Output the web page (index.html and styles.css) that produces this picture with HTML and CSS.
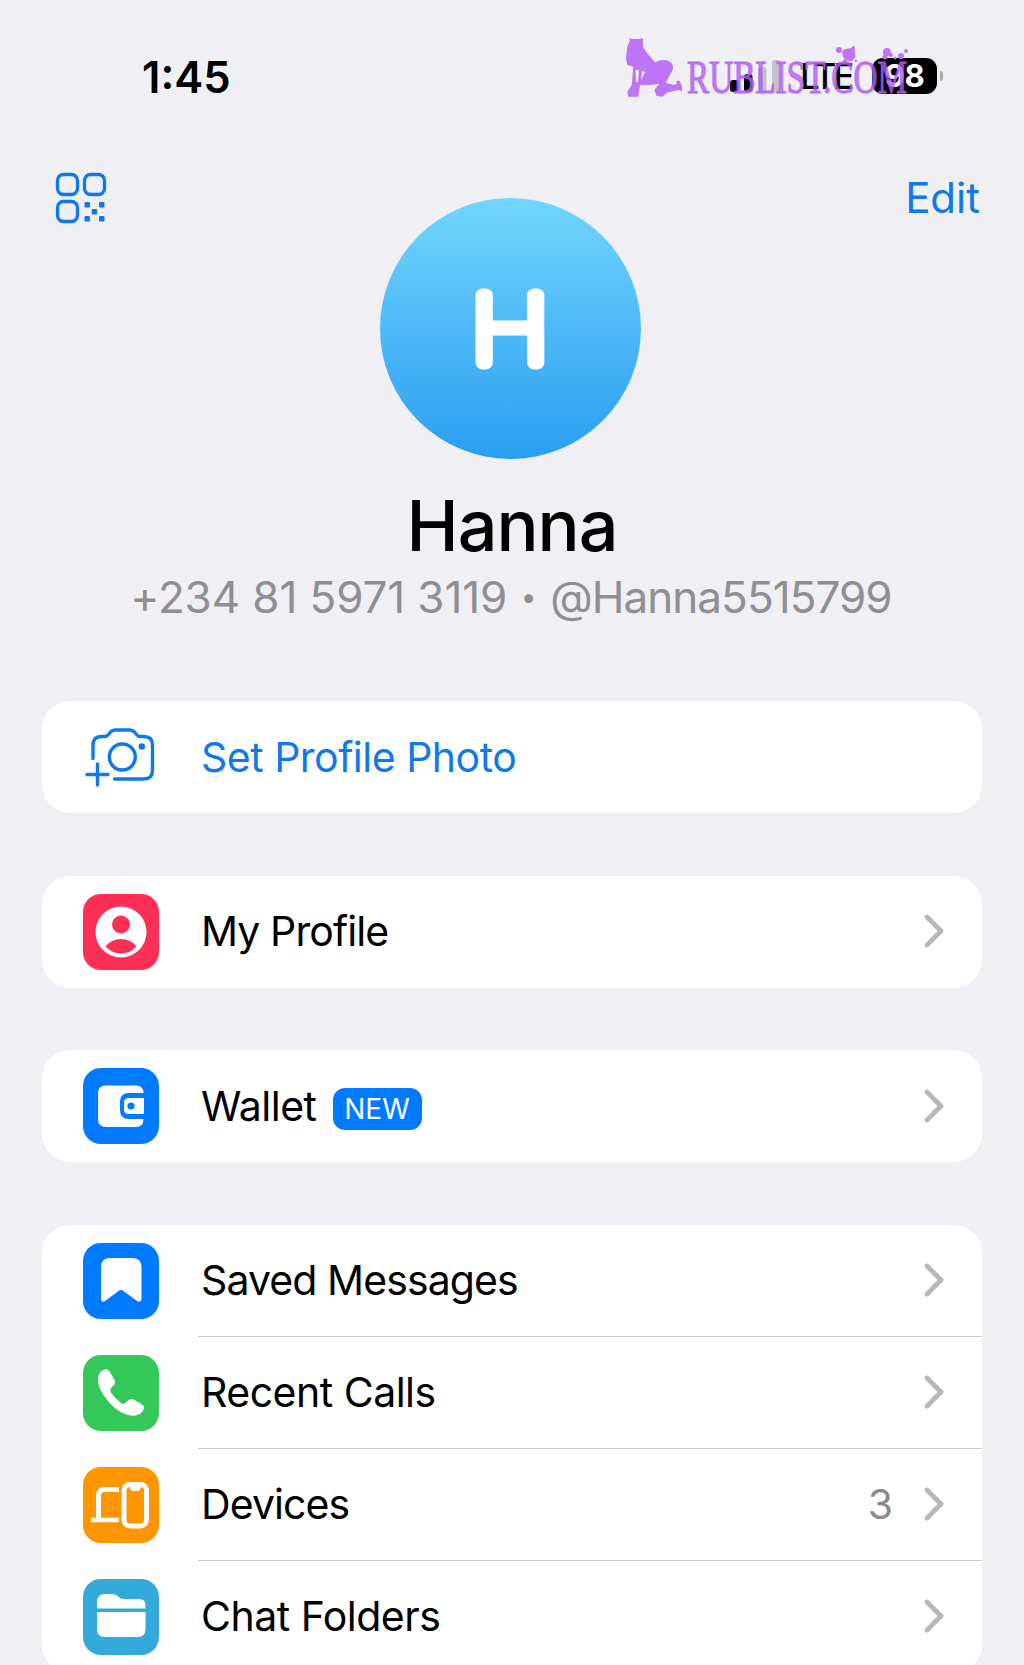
FILE: index.html
```html
<!DOCTYPE html>
<html lang="en">
<head>
<meta charset="utf-8">
<title>Settings</title>
<link rel="stylesheet" href="styles.css">
</head>
<body>
<div class="screen">
  <header class="status">
    <span class="time">1:45</span>
    <div class="indicators">
      <svg class="signal" width="52" height="34" viewBox="0 0 52 34"><rect x="0" y="21" width="8.500" height="12" rx="3"/><rect x="14" y="15" width="8.500" height="18" rx="3"/><g fill="#c3c2c8"><rect x="28" y="8" width="8.500" height="25" rx="3"/><rect x="42" y="1" width="8.500" height="32" rx="3"/></g></svg>
      <span class="network">LTE</span>
      <span class="battery">98</span>
      <span class="nub"></span>
    </div>
    <svg class="watermark" width="290" height="64" viewBox="0 0 290 64">
      <g fill="#be74f7">
        <path fill-rule="evenodd" d="M5 2 4 0 8 1 15 1 18 0 18 8.700Q22 16 26.700 20.300L30 24.300Q34 22 38.300 22 43 22 45.700 24.300 49 28 47.700 32L44.300 38 41 44.700 49 47 52 46 51 43 54.300 42.700 57 48 57 53.500 54 52 50 52.700 41.700 54.700 37.700 58.700 31.700 58 29.300 52 34.300 46 23.300 47 15 47 13.300 58.700 3.300 58.700 2.300 53.700 6.700 47 8.300 28.700 2.300 27 1 20.300 2.300 8.700ZM10.500 32 11 44 13 44 14 32ZM17 33 16 42 20 34Z"/>
        <path d="M217 14Q219 10 225 10.500L229.500 7.500 230.500 19 227 23Q222 24 218 19Z"/><circle cx="214" cy="12" r="3"/><circle cx="220" cy="23" r="2"/><circle cx="231" cy="23" r="1.300"/>
        <circle cx="262" cy="14" r="4"/><circle cx="260" cy="19" r="2.500"/><circle cx="266" cy="17" r="2"/><circle cx="276" cy="18" r="3"/><circle cx="281" cy="13" r="2"/><circle cx="270" cy="20" r="1.500"/>
      </g>
      <text x="62" y="54.500" textLength="220" lengthAdjust="spacingAndGlyphs">RUBLIST.COM</text>
    </svg>
  </header>

  <section class="profile">
    <svg class="qr" width="52" height="52" viewBox="0 0 52 52"><g fill="none" stroke="#0f79e8" stroke-width="3.300"><rect x="2.500" y="2.500" width="20" height="20" rx="6"/><rect x="29.500" y="2.500" width="20" height="20" rx="6"/><rect x="2.500" y="29.500" width="20" height="20" rx="6"/></g><g fill="#0f79e8"><rect x="29.500" y="30" width="5.500" height="5.500" rx="1.200"/><rect x="44" y="30" width="5.500" height="5.500" rx="1.200"/><rect x="36.700" y="37" width="5.500" height="5.500" rx="1.200"/><rect x="29.500" y="44" width="5.500" height="5.500" rx="1.200"/><rect x="44" y="44" width="5.500" height="5.500" rx="1.200"/></g></svg>
    <div class="avatar"><svg width="261" height="261" viewBox="0 0 261 261"><g transform="translate(130 0) scale(1.140 1)"><text class="initial" x="0" y="165" text-anchor="middle">H</text></g></svg></div>
    <span class="edit">Edit</span>
  </section>
  <h1 class="name">Hanna</h1>
  <p class="contact"><span class="phone">+234 81 5971 3119</span><span class="dot">•</span><span class="handle">@Hanna5515799</span></p>

  <main class="cards">
    <section class="card">
      <div class="row action">
        <svg class="icon" width="76" height="76" viewBox="0 0 76 76"><g fill="none" stroke="#0f79e8" stroke-width="3.400" stroke-linecap="round" stroke-linejoin="round"><path d="M10 39.500V26Q10 17.500 18.500 17.500h3q2.500 0 4-2l2-2.500Q29.500 11 32 11H47Q49.500 11 51.500 13l2 2.500q1.500 2 4 2H61q8.500 0 8.500 8.500V51.500q0 8.500-8.500 8.500H31.500"/><circle cx="39.300" cy="38" r="13"/><path d="M4 55.500H25M14.500 45V66"/></g><circle cx="58.800" cy="27.500" r="3.200" fill="#0f79e8"/></svg>
        <span class="label">Set Profile Photo</span>
      </div>
    </section>

    <section class="card">
      <div class="row">
        <svg class="icon" width="76" height="76" viewBox="0 0 76 76"><rect width="76" height="76" rx="18" fill="#fc2f57"/><circle cx="38" cy="38" r="25.500" fill="#fff"/><circle cx="38" cy="30.500" r="9" fill="#fc2f57"/><path d="M22.500 52.500Q28 45 38 45T53.500 52.500Q47 59.500 38 59.500T22.500 52.500Z" fill="#fc2f57"/></svg>
        <span class="label tight">My Profile</span>
        <svg class="chevron" width="20" height="34" viewBox="0 0 20 34"><path d="M3 3 17 17 3 31"/></svg>
      </div>
    </section>

    <section class="card">
      <div class="row">
        <svg class="icon" width="76" height="76" viewBox="0 0 76 76"><rect width="76" height="76" rx="18" fill="#007aff"/><path d="M23 17.500H53Q60.500 17.500 60.500 25H46Q37 25 37 34v8q0 9 9 9h14.500Q60.500 59 53 59H23q-8 0-8-8V25.500q0-8 8-8Z" fill="#fff"/><path d="M45.500 30H61V46H45.500q-4.500 0-4.500-4.500v-7Q41 30 45.500 30Z" fill="#fff"/><circle cx="48" cy="38" r="3.600" fill="#007aff"/></svg>
        <span class="label">Wallet</span><span class="badge">NEW</span>
        <svg class="chevron" width="20" height="34" viewBox="0 0 20 34"><path d="M3 3 17 17 3 31"/></svg>
      </div>
    </section>

    <section class="card">
      <div class="row">
        <svg class="icon" width="76" height="76" viewBox="0 0 76 76"><rect width="76" height="76" rx="18" fill="#007aff"/><path d="M27 15H49q9.500 0 9.500 9V55q0 5-4.500 3L39.800 47.500q-1.800-1.500-3.600 0L22 58q-4 2.500-4-3V24q0-9 9-9Z" fill="#fff"/></svg>
        <span class="label tight">Saved Messages</span>
        <svg class="chevron" width="20" height="34" viewBox="0 0 20 34"><path d="M3 3 17 17 3 31"/></svg>
      </div>
      <div class="row">
        <svg class="icon" width="76" height="76" viewBox="0 0 76 76"><rect width="76" height="76" rx="18" fill="#34c759"/><path d="M18 16.500q6-4.500 9 .5l4 7q2.500 4-1 7-4 3-2 6.500 4 6.500 10 10.500 3 1.800 5.500-1 3.500-4.500 8-2l7 4q5 3 .5 8Q54 62.500 45 60 34 57 25 46 15 34 15 25.500 15 19 18 16.500Z" fill="#fff"/></svg>
        <span class="label">Recent Calls</span>
        <svg class="chevron" width="20" height="34" viewBox="0 0 20 34"><path d="M3 3 17 17 3 31"/></svg>
      </div>
      <div class="row">
        <svg class="icon" width="76" height="76" viewBox="0 0 76 76"><rect width="76" height="76" rx="18" fill="#ff9500"/><g fill="none" stroke="#fff" stroke-width="5"><path d="M36 22.500H21.500Q15.500 22.500 15.500 28.500V52"/><path d="M8 53H36" stroke-width="4.500"/><rect x="41" y="17.500" width="22.500" height="41.500" rx="6"/></g><path d="M46 17H58.500Q58 24 54.500 24h-4.500Q46.500 24 46 17Z" fill="#fff"/></svg>
        <span class="label tight">Devices</span>
        <span class="count">3</span>
        <svg class="chevron" width="20" height="34" viewBox="0 0 20 34"><path d="M3 3 17 17 3 31"/></svg>
      </div>
      <div class="row">
        <svg class="icon" width="76" height="76" viewBox="0 0 76 76"><rect width="76" height="76" rx="18" fill="#34aadc"/><path d="M14 29.500V23q0-8 8-8h7q3 0 5 1.500l3 2.500q1.500 1 4 1H56q6.500 0 6.500 6v3.500ZM14 33H62.500V50q0 8-8 8H22q-8 0-8-8Z" fill="#fff"/></svg>
        <span class="label">Chat Folders</span>
        <svg class="chevron" width="20" height="34" viewBox="0 0 20 34"><path d="M3 3 17 17 3 31"/></svg>
      </div>
    </section>
  </main>
</div>
</body>
</html>
```
FILE: styles.css
```css
* { box-sizing: border-box; }
body { margin: 0; background: #efeff4; color: #000; font-family: Inter, "Liberation Sans", sans-serif; }
.screen { width: 1024px; height: 1665px; overflow: hidden; }
svg { display: block; flex: none; }

.status { position: relative; display: flex; justify-content: space-between; align-items: center; height: 152px; padding: 0 81px 0 142px; }
.time { margin-top: 1px; font-size: 43.500px; font-weight: 600; }
.indicators { display: flex; align-items: center; }
.network { margin-left: 18px; width: 52px; font-size: 35px; font-weight: 500; letter-spacing: -3px; }
.battery { margin-left: 20px; width: 65px; height: 36px; border-radius: 11px; background: #000; color: #fff; font-size: 31px; font-weight: 700; line-height: 36px; text-align: center; letter-spacing: -.5px; }
.nub { margin-left: 3px; width: 3px; height: 10px; border-radius: 0 4px 4px 0; background: #a9a8ad; }
.watermark { position: absolute; left: 625px; top: 38px; }
.watermark text { font: 400 46px "Liberation Serif", serif; fill: #b05cf2; fill-opacity: .8; stroke: #b05cf2; stroke-opacity: .65; stroke-width: 1.600px; }

.profile { display: flex; justify-content: space-between; align-items: flex-start; height: 308px; padding: 19px 44px 0 55px; }
.avatar { width: 261px; height: 261px; margin: 27px 0 0 8px; border-radius: 50%; background: linear-gradient(#72d5fd, #2a9ef1); }
.initial { font-size: 93px; font-weight: 100; fill: #fff; stroke: #fff; stroke-width: 13px; stroke-linejoin: round; }
.qr { margin-top: 1px; }
.edit { font-size: 42px; line-height: 54px; color: #0f79e8; }

.name { margin: 24px 0 0; font-size: 70px; font-weight: 500; line-height: 84px; text-align: center; letter-spacing: -1px; }
.contact { display: flex; justify-content: center; align-items: center; margin: -1px 2px 0 0; font-size: 44px; line-height: 60px; color: #8e8e93; white-space: nowrap; }
.phone { letter-spacing: -.1px; }
.dot { width: 43px; font-size: 28px; text-align: center; }
.handle { letter-spacing: -.95px; }

.cards { display: flex; flex-direction: column; gap: 62.600px; margin-top: 74px; padding: 0 42px; }
.card { border-radius: 28px; background: #fff; }
.row { position: relative; display: flex; align-items: center; height: 112px; padding: 0 38px 0 41px; }
.row + .row::before { content: ""; position: absolute; left: 156px; right: 0; top: -1px; height: 1px; background: #c8c7cc; }
.label { margin: -1px 0 0 42px; font-size: 41px; line-height: 50px; letter-spacing: -.5px; white-space: nowrap; }
.tight { letter-spacing: -.9px; }
.action .label { color: #0f79e8; }
.badge { margin: 5px 0 0 16px; width: 89px; height: 42px; border-radius: 12px; background: #007aff; color: #fff; font-size: 28px; line-height: 43px; text-align: center; }
.chevron { margin: -1px 0 0 auto; fill: none; stroke: #b8b8bb; stroke-width: 4.800; stroke-linecap: round; stroke-linejoin: round; }
.count { margin: -1px 0 0 auto; font-size: 41px; color: #8a8a8e; }
.count + .chevron { margin-left: 31px; }
```
